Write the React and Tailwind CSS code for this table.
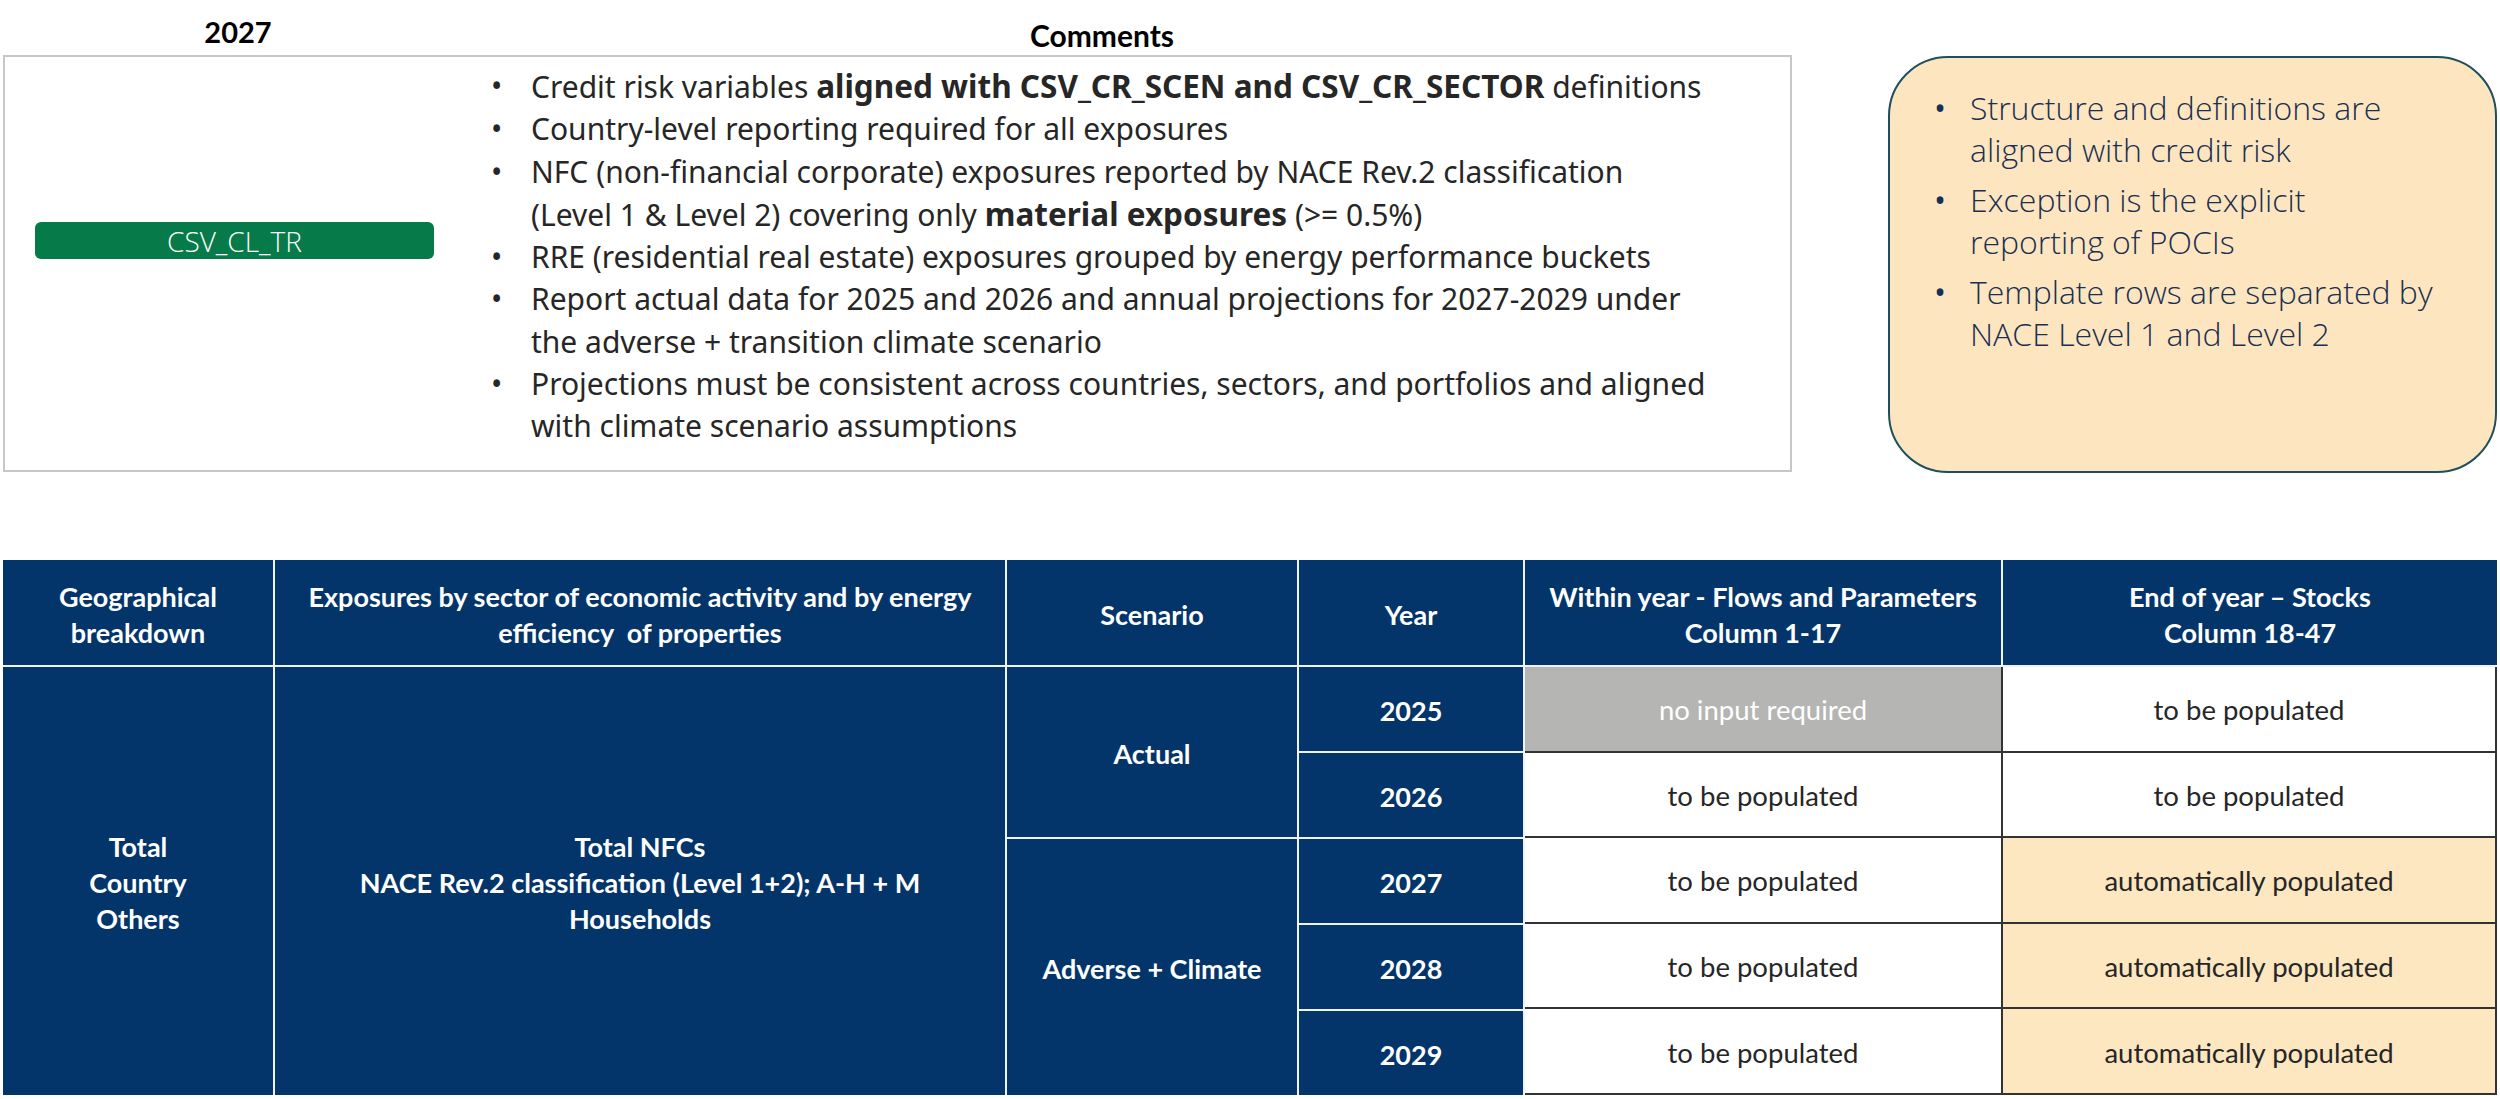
import React from "react";

const cellHead =
  "flex items-center justify-center text-center text-white font-bold text-[27px] leading-[36px] pt-[4px] bg-[#03356a]";
const navyBody =
  "flex items-center justify-center text-center text-white font-bold text-[27px] leading-[36px] pt-[3px] bg-[#03356a]";
const dataCell =
  "flex items-center justify-center text-center text-[27.5px] pt-[2px] text-[#262626]";

function Bullet({ children }) {
  return (
    <li className="flex">
      <span className="w-[40px] shrink-0">•</span>
      <span>{children}</span>
    </li>
  );
}

function YBullet({ children }) {
  return (
    <li className="flex">
      <span className="w-[36px] shrink-0 text-[#13305a] font-normal">•</span>
      <span>{children}</span>
    </li>
  );
}

export default function App() {
  return (
    <div className="w-[2500px] h-[1099px] bg-white overflow-hidden pl-[3px]">
      {/* labels row */}
      <div className="flex h-[55px] font-['Lato',sans-serif] font-bold text-black">
        <div className="w-[470px] text-center pt-[10px] text-[29px]">2027</div>
        <div className="w-[1258px] text-center pt-[13px] text-[30px]">Comments</div>
      </div>

      {/* top row */}
      <div className="flex items-start">
        <div className="w-[1789px] h-[417px] border-2 border-[#c7c7c7] flex items-start font-['Noto_Sans',sans-serif] text-[#262626]">
          <div className="w-[486px] shrink-0 pl-[30px] pt-[165px]">
            <div className="w-[399px] h-[37px] rounded-[6px] bg-[#077a4a] text-white flex items-center justify-center font-['Open_Sans',sans-serif] font-light text-[28px]">
              CSV_CL_TR
            </div>
          </div>
          <ul className="pt-[8px] text-[30px] leading-[42.3px]">
            <Bullet>
              Credit risk variables{" "}
              <b className="font-bold text-[31.5px]">aligned with CSV_CR_SCEN and CSV_CR_SECTOR</b>{" "}
              definitions
            </Bullet>
            <Bullet>Country-level reporting required for all exposures</Bullet>
            <Bullet>
              NFC (non-financial corporate) exposures reported by NACE Rev.2 classification
              <br />
              (Level 1 &amp; Level 2) covering only{" "}
              <b className="font-bold text-[31.5px]">material exposures</b> (&gt;= 0.5%)
            </Bullet>
            <Bullet>
              RRE (residential real estate) exposures grouped by energy performance buckets
            </Bullet>
            <Bullet>
              Report actual data for 2025 and 2026 and annual projections for 2027-2029 under
              <br />
              the adverse + transition climate scenario
            </Bullet>
            <Bullet>
              Projections must be consistent across countries, sectors, and portfolios and aligned
              <br />
              with climate scenario assumptions
            </Bullet>
          </ul>
        </div>

        <div className="ml-[96px] mt-[1px] w-[609px] h-[417px] rounded-[60px] border-2 border-[#1d4f5f] bg-[#fde6bf] pt-[29px] pl-[44px] font-['Open_Sans',sans-serif] font-light text-[32px] leading-[42px] text-[#1a2f52]">
          <ul className="flex flex-col gap-[8px]">
            <YBullet>
              Structure and definitions are
              <br />
              aligned with credit risk
            </YBullet>
            <YBullet>
              Exception is the explicit
              <br />
              reporting of POCIs
            </YBullet>
            <YBullet>
              Template rows are separated by
              <br />
              NACE Level 1 and Level 2
            </YBullet>
          </ul>
        </div>
      </div>

      {/* table */}
      <div className="mt-[87px] grid w-[2494px] grid-cols-[270px_730px_290px_224px_476px_494px] grid-rows-[105px_84px_84px_84px_84px_84px] gap-[2px] bg-[#eef3f9] font-['Lato',sans-serif]">
        <div className={`${cellHead} col-start-1 row-start-1`}>
          Geographical
          <br />
          breakdown
        </div>
        <div className={`${cellHead} col-start-2 row-start-1`}>
          Exposures by sector of economic activity and by energy
          <br />
          efficiency&nbsp; of properties
        </div>
        <div className={`${cellHead} col-start-3 row-start-1`}>Scenario</div>
        <div className={`${cellHead} col-start-4 row-start-1`}>Year</div>
        <div className={`${cellHead} col-start-5 row-start-1`}>
          Within year - Flows and Parameters
          <br />
          Column 1-17
        </div>
        <div className={`${cellHead} col-start-6 row-start-1`}>
          End of year – Stocks
          <br />
          Column 18-47
        </div>

        <div className={`${navyBody} col-start-1 row-start-2 row-span-5`}>
          Total
          <br />
          Country
          <br />
          Others
        </div>
        <div className={`${navyBody} col-start-2 row-start-2 row-span-5`}>
          Total NFCs
          <br />
          NACE Rev.2 classification (Level 1+2); A-H + M
          <br />
          Households
        </div>
        <div className={`${navyBody} col-start-3 row-start-2 row-span-2`}>Actual</div>
        <div className={`${navyBody} col-start-3 row-start-4 row-span-3`}>Adverse + Climate</div>

        <div className={`${navyBody} col-start-4 row-start-2`}>2025</div>
        <div className={`${navyBody} col-start-4 row-start-3`}>2026</div>
        <div className={`${navyBody} col-start-4 row-start-4`}>2027</div>
        <div className={`${navyBody} col-start-4 row-start-5`}>2028</div>
        <div className={`${navyBody} col-start-4 row-start-6`}>2029</div>

        <div className="col-start-5 col-span-2 row-start-2 row-span-5 grid grid-cols-[476px_1fr] grid-rows-5 gap-[2px] bg-[#333333] border-r-2 border-b-2 border-[#333333]">
          <div className={`${dataCell} bg-[#b5b5b3] text-white`}>no input required</div>
          <div className={`${dataCell} bg-white`}>to be populated</div>
          <div className={`${dataCell} bg-white`}>to be populated</div>
          <div className={`${dataCell} bg-white`}>to be populated</div>
          <div className={`${dataCell} bg-white`}>to be populated</div>
          <div className={`${dataCell} bg-[#fde7c0]`}>automatically populated</div>
          <div className={`${dataCell} bg-white`}>to be populated</div>
          <div className={`${dataCell} bg-[#fde7c0]`}>automatically populated</div>
          <div className={`${dataCell} bg-white`}>to be populated</div>
          <div className={`${dataCell} bg-[#fde7c0]`}>automatically populated</div>
        </div>
      </div>
    </div>
  );
}
